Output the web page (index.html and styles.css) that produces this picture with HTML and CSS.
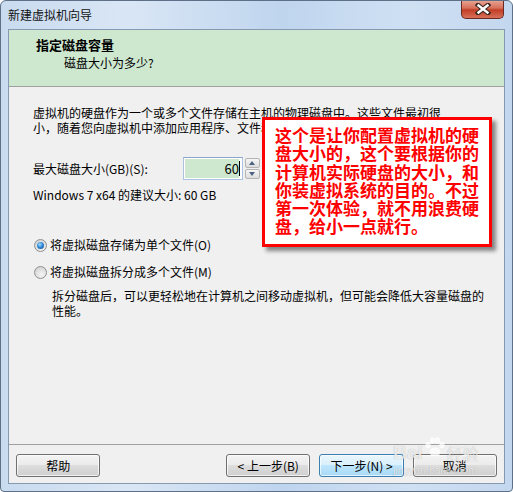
FILE: index.html
```html
<!DOCTYPE html>
<html lang="zh-CN">
<head>
    <meta charset="UTF-8">
    <title>新建虚拟机向导</title>
    <link rel="stylesheet" href="styles.css">
</head>
<body>

<div class="window">
    <div class="titlebar">
        <span class="title">新建虚拟机向导</span>
        <div class="close">
            <svg width="16" height="12" viewBox="0 0 16 12">
                <path d="M3 2 L13 10 M13 2 L3 10" stroke="#3b2620" stroke-width="4.6" stroke-linecap="square"/>
                <path d="M3.5 2.5 L12.5 9.5 M12.5 2.5 L3.5 9.5" stroke="#fff" stroke-width="2.4" stroke-linecap="square"/>
            </svg>
        </div>
    </div>

    <div class="client">
        <div class="header">
            <div class="head-title">指定磁盘容量</div>
            <div class="head-sub">磁盘大小为多少?</div>
        </div>

        <div class="content">
            <p class="intro">虚拟机的硬盘作为一个或多个文件存储在主机的物理磁盘中。这些文件最初很<br>小，随着您向虚拟机中添加应用程序、文件和数据而逐渐变大。</p>

            <div class="size-row">
                <label class="size-label">最大磁盘大小(GB)(S):</label>
                <div class="size-input"><span class="value">60</span><span class="caret"></span></div>
                <div class="spinner">
                    <span class="spin up"></span>
                    <span class="spin down"></span>
                </div>
            </div>

            <p class="hint">Windows 7 x64 的建议大小: 60 GB</p>

            <div class="radio-row">
                <span class="radio checked"></span>
                <span>将虚拟磁盘存储为单个文件(O)</span>
            </div>
            <div class="radio-row second">
                <span class="radio"></span>
                <span>将虚拟磁盘拆分成多个文件(M)</span>
            </div>
            <p class="option-desc">拆分磁盘后，可以更轻松地在计算机之间移动虚拟机，但可能会降低大容量磁盘的<br>性能。</p>
        </div>

        <div class="footer">
            <button class="btn">帮助</button>
            <div class="spacer"></div>
            <button class="btn">&lt; 上一步(B)</button>
            <button class="btn default">下一步(N) &gt;</button>
            <button class="btn">取消</button>
        </div>
    </div>

    <!-- annotation pasted over the dialog -->
    <div class="note">这个是让你配置虚拟机的硬<br>盘大小的，这个要根据你的<br>计算机实际硬盘的大小，和<br>你装虚拟系统的目的。不过<br>第一次体验，就不用浪费硬<br>盘，给小一点就行。</div>

    <div class="watermark">
        <div class="wm-big">
            <span>Bai</span>
            <svg class="paw" width="22" height="22" viewBox="0 0 22 22">
                <ellipse cx="4" cy="8" rx="2.6" ry="3.2"/>
                <ellipse cx="8.5" cy="3.5" rx="2.6" ry="3.2"/>
                <ellipse cx="13.5" cy="3.5" rx="2.6" ry="3.2"/>
                <ellipse cx="18" cy="8" rx="2.6" ry="3.2"/>
                <ellipse cx="11" cy="15" rx="5.5" ry="4.5"/>
            </svg>
            <span class="wm-cn">经验</span>
        </div>
        <div class="wm-small">jingyan.baidu.com</div>
    </div>
</div>

</body>
</html>
```

FILE: styles.css
```css
body {
    margin: 0;
    padding: 0;
    font-family: "Noto Sans CJK SC", "Noto Sans", sans-serif;
    font-size: 12px;
    color: #000;
}
p {
    margin: 0;
}
.window {
    position: relative;
    width: 513px;
    height: 492px;
    box-sizing: border-box;
    border: 1px solid #5d7088;
    border-radius: 6px 6px 4px 4px;
    padding: 0 7px 7px 7px;
    background: linear-gradient(to right, #c9dbef 0%, #d9e6f5 25%, #bfd5ee 55%, #cfe0f3 80%, #c3d7ee 100%);
    overflow: hidden;
}
.titlebar {
    height: 28px;
    display: flex;
    align-items: center;
    position: relative;
}
.title {
    font-size: 12px;
    line-height: 16px;
    color: #111;
}
.close {
    position: absolute;
    right: 1px;
    top: -1px;
    width: 43px;
    height: 19px;
    box-sizing: border-box;
    border: 1px solid #6a2a20;
    border-top: none;
    border-radius: 0 0 5px 5px;
    background: linear-gradient(#e9a898 0%, #d66f5a 45%, #c23e26 55%, #d7705a 100%);
    display: flex;
    align-items: center;
    justify-content: center;
}
.client {
    height: 455px;
    box-sizing: border-box;
    border: 1px solid #8799b1;
    background-color: #f0f0f0;
    display: flex;
    flex-direction: column;
}
.header {
    height: 56px;
    background-color: #cde8cf;
    border-bottom: 1px solid #a0a0a0;
}
.head-title {
    font-weight: bold;
    font-size: 13px;
    line-height: 16px;
    padding: 7px 0 0 27px;
}
.head-sub {
    line-height: 16px;
    padding: 2px 0 0 55px;
}
.content {
    padding: 18px 0 0 24px;
}
.intro {
    line-height: 15px;
    white-space: nowrap;
}
.size-row {
    display: flex;
    align-items: center;
    height: 23px;
    margin-top: 22px;
}
.size-label {
    width: 150px;
}
.size-input {
    width: 60px;
    height: 23px;
    box-sizing: border-box;
    border: 1px solid #a9c3e0;
    border-top-color: #8aa5c8;
    background-color: #fff;
    padding: 1px;
    display: flex;
    justify-content: flex-end;
    align-items: center;
}
.size-input .value {
    flex: 1;
    align-self: stretch;
    background-color: #cde8cf;
    text-align: right;
    line-height: 19px;
    font-size: 13px;
}
.caret {
    width: 1px;
    height: 15px;
    background-color: #000;
    margin: 0 1px 0 0;
}
.spinner {
    margin-left: 2px;
    display: flex;
    flex-direction: column;
    gap: 1px;
}
.spin {
    width: 15px;
    height: 10px;
    box-sizing: border-box;
    border: 1px solid #b4b4b4;
    border-radius: 2px;
    background: linear-gradient(#f6f6f6, #dcdcdc);
    position: relative;
}
.spin::after {
    content: "";
    position: absolute;
    left: 3px;
    top: 2px;
    border-left: 3.5px solid transparent;
    border-right: 3.5px solid transparent;
}
.spin.up::after {
    border-bottom: 4px solid #4e6283;
}
.spin.down::after {
    border-top: 4px solid #4e6283;
}
.hint {
    line-height: 15px;
    margin-top: 7px;
}
.radio-row {
    display: flex;
    align-items: center;
    gap: 3px;
    line-height: 16px;
    margin-top: 35px;
    padding-left: 1px;
}
.radio-row.second {
    margin-top: 11px;
}
.radio {
    width: 13px;
    height: 13px;
    box-sizing: border-box;
    border-radius: 50%;
    border: 1px solid #8e8f8f;
    background: radial-gradient(circle at 60% 70%, #f4f4f4 0%, #d8d8d8 70%, #c9c9c9 100%);
    position: relative;
}
.radio.checked::after {
    content: "";
    position: absolute;
    left: 2px;
    top: 2px;
    width: 7px;
    height: 7px;
    border-radius: 50%;
    background: radial-gradient(circle at 40% 35%, #a9e0ff 0%, #2f8ad6 45%, #15448a 100%);
}
.option-desc {
    line-height: 15px;
    margin-top: 8px;
    padding-left: 19px;
    white-space: nowrap;
}
.footer {
    margin-top: auto;
    border-top: 1px solid #a0a0a0;
    padding: 9px 7px 6px 7px;
    display: flex;
    gap: 9px;
}
.footer .spacer {
    width: 110px;
}
.btn {
    width: 86px;
    height: 23px;
    box-sizing: border-box;
    border: 1px solid #707070;
    border-radius: 3px;
    background: linear-gradient(#f3f3f3 0%, #ebebeb 49%, #dddddd 50%, #cfcfcf 100%);
    font-family: "Noto Sans CJK SC", "Noto Sans", sans-serif;
    font-size: 12px;
    color: #000;
    padding: 0;
    box-shadow: inset 0 0 0 1px rgba(255, 255, 255, 0.7);
}
.btn.default {
    border-color: #3c7fb1;
    background: linear-gradient(#eaf6fd 0%, #d9f0fc 49%, #bee6fd 50%, #a7d9f5 100%);
}
.note {
    position: absolute;
    left: 261px;
    top: 116px;
    width: 230px;
    box-sizing: border-box;
    border: 3px solid #ff0000;
    background-color: #fff;
    box-shadow: 4px 4px 4px rgba(0, 0, 0, 0.45);
    padding: 6px 0 8px 10px;
    color: #ff0000;
    font-weight: bold;
    font-size: 17px;
    line-height: 18.3px;
    white-space: nowrap;
}
.watermark {
    position: absolute;
    left: 392px;
    top: 438px;
    color: rgba(255, 255, 255, 0.75);
    text-shadow: 0 0 1px rgba(0, 0, 0, 0.3);
    font-family: "Liberation Sans", sans-serif;
    white-space: nowrap;
    pointer-events: none;
}
.wm-big {
    display: flex;
    align-items: flex-end;
    height: 24px;
    font-size: 19px;
    font-weight: bold;
    line-height: 20px;
}
.paw {
    fill: rgba(255, 255, 255, 0.75);
    margin: 0 1px 4px 1px;
}
.wm-cn {
    font-family: "Noto Sans CJK SC", sans-serif;
    font-size: 16px;
    font-weight: normal;
}
.wm-small {
    font-size: 10px;
    line-height: 11px;
    margin-top: 2px;
    letter-spacing: 0.2px;
}
```
